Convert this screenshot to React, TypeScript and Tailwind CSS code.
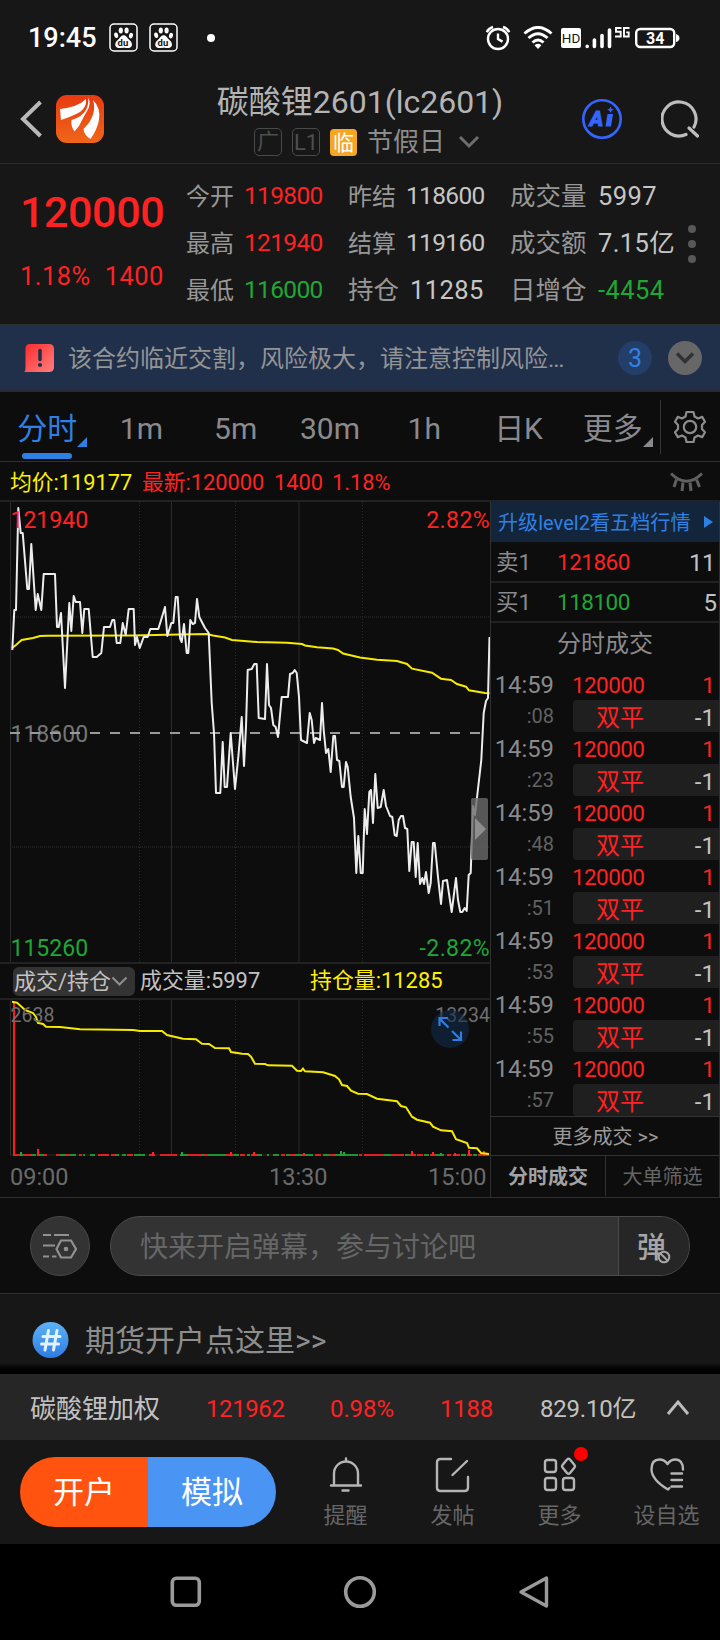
import React from 'react'

interface Trade {
  sec: string
  price: string
  qty: number
}

interface VolumeRun {
  from: number
  to: number
  up: boolean
}

interface VolumeSpike {
  x: number
  height: number
  up: boolean
}

const trades: Trade[] = [
  { sec: ':08', price: '120000', qty: 1 },
  { sec: ':23', price: '120000', qty: 1 },
  { sec: ':48', price: '120000', qty: 1 },
  { sec: ':51', price: '120000', qty: 1 },
  { sec: ':53', price: '120000', qty: 1 },
  { sec: ':55', price: '120000', qty: 1 },
  { sec: ':57', price: '120000', qty: 1 },
]

const periods = ['分时', '1m', '5m', '30m', '1h', '日K', '更多']

const pricePoints =
  '12.3,650 14.3,610 16,610 18.3,508 20.7,533 22.7,533 27.3,589 29,589 31.3,544 35.7,610 37.7,594 41.3,610 43.7,574 55,574 57,627 58.7,627 61,613 65,688 69.3,603 71.3,631 73.7,596 75.7,602 80,602 82.3,633 84.3,609 88.7,609 92.7,657 96.7,657 101.3,653 104,627 110,627 112.3,620 114.3,620 116.7,643 120.3,643 122.7,623 125.7,635 128.7,609 133.7,609 135,645 137,637 139.7,648 143.7,637 147.7,637 150.3,629 158.3,629 162,617 165,607 167.3,636 171.3,623 173.3,623 175.7,597 177.7,597 180,638 181.7,642 184,624 186.7,653 188.3,653 190.3,620 192.7,624 195,623 197,599 199.3,617 205,628 208.7,633 211.7,703 214,733 216,793 220.3,793 222.7,742 224.7,787 227,787 230.7,733 235,789 238.3,757 241.7,717 244,766 246,727 247.7,670 251.7,669 254.3,664 256.7,664 258.7,718 265,719 267,664 269,705 271,708 273.3,725 275.7,727 278,737 281.7,697 288,697 290,674 292.7,673 294.7,670 296.7,673 299,697 301,740 307,743 309.7,713 311.7,720 314,743 315.7,738 320,740 322,703 323.7,730 326,753 328.3,749 330.7,772 333.3,736 335,736 337,760 339.3,761 342,787 343.7,787 346,762 347.7,767 350.7,797 354,818 356.3,873 358.3,836 360.7,873 362.7,873 364.7,809 367,834 369.3,792 371,790 373,823 375.3,774 377.7,808 380.7,807 383.7,790 386,806 390,816 392.3,817 394.7,835 396.7,836 398.7,820 401,816 403,816 405,828 407.3,829 409.3,871 411.7,842 413.7,842 415.7,877 417.7,843 420,884 422.3,878 424,884 426,872 428.7,893 430.7,883 433,843 434.7,843 438,877 441,904 443,881 447,880 451.7,912 456,878 458,900 460.3,912 462.3,912 464.7,908 466.7,911 468.7,875 470.7,873 473,806 475,815 481.3,760 483.7,713 486,701 488,698 489.5,637'

const averagePoints =
  '12,648 16,645 21.7,640 33,638 40,636 47,635.7 133,635.5 167,634.7 207,634 213,635.5 225,637.5 232,640 257,642 287,642.7 302,644 305,645.5 317,647.3 333,648.5 338,650 343,653.5 360,657.5 377,659.7 397,661 407,664 412,668.7 432,672.7 441,678.7 451,680 457,684 466,686.7 469,690.3 485,693 489.5,693.3'

const holdPoints =
  '12,1001.7 17,1002.7 25,1010 33,1013 36,1017 38,1023 43,1024 46,1026.7 60,1027 80,1029.3 133,1030 140,1031 150,1031 162,1031 167,1035 183,1038.7 196,1039.3 202,1043.7 209,1044 215,1048 229,1048.3 231,1052 242,1053.7 248,1054 251,1056.7 255,1063.7 265,1064 268,1065.3 292,1065.7 297,1070.7 301,1071 303,1068.7 305,1071.3 323,1072.3 335,1076 339,1079.3 342,1085 347,1086 351,1090.7 358,1093.7 367,1094 377,1098.7 397,1101.3 401,1106 406,1107.3 412,1116.7 417,1119.7 430,1122.7 433,1126.7 441,1130.3 452,1131.3 456,1139.3 467,1143 469,1147.7 477,1148.3 481,1153 489,1154'

const volumeRuns: VolumeRun[] = [
  { from: 15, to: 20, up: true },
  { from: 20, to: 23, up: false },
  { from: 23, to: 31, up: true },
  { from: 31, to: 36, up: false },
  { from: 39, to: 44, up: false },
  { from: 44, to: 47, up: true },
  { from: 56, to: 60, up: true },
  { from: 60, to: 66, up: false },
  { from: 66, to: 70, up: true },
  { from: 70, to: 76, up: false },
  { from: 79, to: 82, up: true },
  { from: 83, to: 85, up: false },
  { from: 90, to: 95, up: false },
  { from: 98, to: 109, up: true },
  { from: 111, to: 115, up: true },
  { from: 115, to: 119, up: false },
  { from: 122, to: 126, up: false },
  { from: 127, to: 133, up: true },
  { from: 134, to: 145, up: false },
  { from: 149, to: 155, up: true },
  { from: 160, to: 177, up: true },
  { from: 180, to: 188, up: false },
  { from: 188, to: 201, up: true },
  { from: 201, to: 204, up: false },
  { from: 204, to: 208, up: true },
  { from: 208, to: 226, up: false },
  { from: 226, to: 234, up: true },
  { from: 234, to: 239, up: false },
  { from: 240, to: 245, up: true },
  { from: 247, to: 250, up: false },
  { from: 251, to: 257, up: true },
  { from: 257, to: 262, up: false },
  { from: 267, to: 269, up: false },
  { from: 273, to: 279, up: false },
  { from: 281, to: 285, up: true },
  { from: 286, to: 290, up: false },
  { from: 290, to: 295, up: true },
  { from: 295, to: 302, up: false },
  { from: 302, to: 306, up: true },
  { from: 306, to: 313, up: false },
  { from: 315, to: 321, up: true },
  { from: 323, to: 329, up: false },
  { from: 329, to: 335, up: true },
  { from: 335, to: 358, up: false },
  { from: 359, to: 362, up: true },
  { from: 364, to: 384, up: true },
  { from: 384, to: 391, up: false },
  { from: 391, to: 397, up: true },
  { from: 397, to: 404, up: true },
  { from: 405, to: 409, up: false },
  { from: 409, to: 416, up: true },
  { from: 417, to: 423, up: true },
  { from: 424, to: 429, up: false },
  { from: 430, to: 436, up: true },
  { from: 436, to: 444, up: false },
  { from: 447, to: 451, up: true },
  { from: 453, to: 460, up: true },
  { from: 461, to: 466, up: false },
  { from: 467, to: 472, up: true },
  { from: 473, to: 477, up: false },
  { from: 478, to: 489, up: true },
]

const volumeSpikes: VolumeSpike[] = [
  { x: 20, height: 4, up: false },
  { x: 37, height: 7, up: true },
  { x: 152, height: 4, up: true },
  { x: 181, height: 4, up: false },
  { x: 230, height: 4, up: true },
  { x: 253, height: 4, up: true },
  { x: 303, height: 3, up: true },
  { x: 340, height: 5, up: false },
  { x: 343, height: 4, up: false },
  { x: 411, height: 5, up: true },
  { x: 432, height: 4, up: true },
  { x: 440, height: 3, up: false },
  { x: 454, height: 3, up: true },
  { x: 468, height: 6, up: true },
  { x: 483, height: 5, up: true },
]

const BaiduIcon: React.FC = () => (
  <svg width="29" height="29" viewBox="0 0 29 29" fill="#fff">
    <rect x="1" y="1" width="27" height="27" rx="4" fill="none" stroke="#fff" strokeWidth="1.5" />
    <ellipse cx="7.2" cy="12.3" rx="2" ry="2.8" transform="rotate(-15 7.2 12.3)" />
    <ellipse cx="11.8" cy="7.6" rx="2.1" ry="3" />
    <ellipse cx="17.6" cy="7.6" rx="2.1" ry="3" />
    <ellipse cx="22" cy="12.6" rx="2" ry="2.8" transform="rotate(15 22 12.6)" />
    <path d="M14.6 12.2c2.3 0 3.2 2 4.6 3.6 1.6 1.8 3.8 3.2 3.8 5.7 0 2-1.5 3.6-3.6 3.6-1.7 0-3-.4-4.8-.4s-3.1.4-4.8.4c-2.1 0-3.6-1.6-3.6-3.6 0-2.5 2.2-3.9 3.8-5.7 1.4-1.6 2.3-3.6 4.6-3.6z" />
    <text x="8.6" y="23.3" fontSize="9.5" fontWeight="700" fontFamily="Roboto, sans-serif" fill="#171717">du</text>
  </svg>
)

const StatusBar: React.FC = () => (
  <div className="flex h-[75px] items-center pr-[40px] pl-[28px] text-white">
    <span className="w-[81px] pt-[2px] text-[27px] leading-[73px] font-medium">19:45</span>
    <div className="flex gap-[11px]">
      <BaiduIcon />
      <BaiduIcon />
    </div>
    <span className="ml-[29px] h-2 w-2 rounded-full bg-white" />
    <div className="ml-auto flex items-center">
      <svg width="26" height="26" viewBox="0 0 26 26" fill="none" stroke="#fff" strokeWidth="2.4">
        <circle cx="13" cy="14" r="10" />
        <path d="M13 8.5V14l4.500 2.600" />
        <path d="M1.800 7.200Q3.500 3.200 8 2M24.200 7.200Q22.500 3.200 18 2" />
      </svg>
      <svg className="ml-3" width="30" height="24" viewBox="0 0 30 24" fill="none" stroke="#fff" strokeWidth="3">
        <path d="M1.500 7.500Q15-4.500 28.500 7.500" />
        <path d="M5.500 12Q15 3.500 24.500 12" />
        <path d="M9.500 16.500Q15 11.500 20.500 16.500" />
        <path d="M11.500 19.200Q15 16.500 18.500 19.200L15 23z" fill="#fff" stroke="none" />
      </svg>
      <span className="ml-2 h-5 w-5 rounded-[2px] bg-white text-center text-[13.5px] leading-[21px] text-[#171717]">HD</span>
      <svg className="ml-1" width="27" height="22" viewBox="0 0 27 22" stroke="#fff" strokeWidth="3.6" strokeLinecap="round">
        <path d="M2.200 19.400v.1M9.400 13v6.500M17 8.500v11M24.500 3v16.500" />
      </svg>
      <svg className="mb-[10px] ml-[3px]" width="15" height="11" viewBox="0 0 15 11" fill="none" stroke="#fff" strokeWidth="1.9">
        <path d="M6.500 1H1v3.800h4.700V9.500H0M14.500 1H9v8.500h4.700V5.400h-2.500" />
      </svg>
      <svg className="ml-[5px]" width="45" height="22" viewBox="0 0 45 22">
        <rect x="1.2" y="2" width="38" height="18" rx="4" fill="none" stroke="#fff" strokeWidth="2.4" />
        <path d="M41 7q3.500 1 3.500 4T41 15z" fill="#fff" />
        <text x="20.2" y="16.5" textAnchor="middle" fontSize="16" fontWeight="700" fontFamily="Roboto, sans-serif" fill="#fff">34</text>
      </svg>
    </div>
  </div>
)

const Header: React.FC = () => (
  <div className="flex h-[89px] border-b border-[#2a2a2a] pr-4 pl-5">
    <svg className="mt-[25px]" width="23" height="38" viewBox="0 0 23 38" fill="none" stroke="#b9b9b9" strokeWidth="4">
      <path d="M20.500 2L3 19l17.500 17" />
    </svg>
    <svg className="mt-5 ml-[13px]" width="48" height="48" viewBox="0 0 48 48" fill="#fff">
      <defs>
        <linearGradient id="brand" x1="0" y1="0" x2="0" y2="1">
          <stop offset="0" stopColor="#e83a12" />
          <stop offset="1" stopColor="#f0661a" />
        </linearGradient>
      </defs>
      <rect width="48" height="48" rx="11" fill="url(#brand)" />
      <path d="M4 14Q22 12 30 4Q31 12 24 17Q17 21 5 25Z" />
      <path d="M32 2.500Q36 9 30.500 17Q28 21 23 31L18.500 36.500Q14.500 31 15.500 25Q26 22 30 15Q33 9 32 2.500Z" />
      <path d="M37 5Q45 13 43 25Q41 35 34.500 44Q28 40 27.500 34Q35 27 37.500 18Q39 11 37 5Z" />
    </svg>
    <div className="ml-[100px] flex w-[312px] flex-col items-center">
      <h1 className="mt-[7px] text-[32px] leading-10 font-normal whitespace-nowrap text-[#b4b4b4]">碳酸锂2601(lc2601)</h1>
      <div className="mt-[4px] ml-[14px] flex items-center">
        <span className="h-[28px] w-[28px] rounded-[5px] border border-[#4a4a4a] text-center text-[22px] leading-[26px] text-[#4f4f4f]">广</span>
        <span className="ml-[10px] h-[28px] w-[28px] rounded-[5px] border border-[#4a4a4a] text-center text-[22px] leading-[27px] text-[#4f4f4f]">L1</span>
        <span className="ml-[10px] h-[27px] w-[27px] rounded-[4px] bg-[#f5a623] text-center text-[21px] leading-[28px] text-white">临</span>
        <span className="ml-[10px] text-[26px] leading-[32px] text-[#8c8c8c]">节假日</span>
        <svg className="ml-[13px]" width="22" height="14" viewBox="0 0 22 14" fill="none" stroke="#6e6e6e" strokeWidth="3">
          <path d="M2 2l9 9 9-9" />
        </svg>
      </div>
    </div>
    <svg className="mt-[23px] ml-[65px] shrink-0" width="42" height="42" viewBox="0 0 42 42">
      <circle cx="21" cy="21" r="18.7" fill="none" stroke="#3565ff" strokeWidth="2.6" />
      <text x="8.5" y="28" fontSize="21" fontWeight="900" fontStyle="italic" fontFamily="Roboto, sans-serif" fill="#3565ff" stroke="#3565ff" strokeWidth="0.8">A</text>
      <path d="M26.500 16h5.500l-2 12.500h-5.500z" fill="#3565ff" />
      <path d="M29.500 8.500l1 2.300 2.300 1-2.300 1-1 2.300-1-2.300-2.300-1 2.300-1z" fill="#3565ff" />
    </svg>
    <svg className="mt-[23px] ml-[38px] shrink-0" width="40" height="42" viewBox="0 0 40 42" fill="none" stroke="#bdbdbd" strokeWidth="3.2" strokeLinecap="round">
      <path d="M25 36.500A17 17 0 1 1 33 29M28 30l8.500 8" />
    </svg>
  </div>
)

interface QuoteCellProps {
  label: string
  value: string
  labelClass?: string
  valueClass: string
}

const QuoteCell: React.FC<QuoteCellProps> = ({ label, value, labelClass = 'text-[24px]', valueClass }) => (
  <>
    <span className={`whitespace-nowrap text-[#979797] ${labelClass}`}>{label}</span>
    <span className={`whitespace-nowrap ${valueClass}`}>{value}</span>
  </>
)

const TIGHT = 'text-[24.5px] tracking-[-0.65px]'
const WIDE = 'text-[25.5px] tracking-[0.4px]'

const QuotePanel: React.FC = () => (
  <div className="flex h-[161px] border-b border-[#2d2d2d]">
    <div className="w-[186px] pl-[20px]">
      <div className="mt-[22px] text-[43px] leading-[52px] font-medium tracking-[-0.4px] text-[#ff2222]">120000</div>
      <div className="mt-[22px] flex gap-[14px] text-[25.5px] leading-8 tracking-[0.45px] text-[#ff2222]">
        <span>1.18%</span>
        <span>1400</span>
      </div>
    </div>
    <div className="mt-[9px] grid h-[141px] w-[492px] grid-cols-[58px_104px_58px_104px_88px_80px] grid-rows-3 items-center">
      <QuoteCell label="今开" value="119800" valueClass={`${TIGHT} text-[#ff2222]`} />
      <QuoteCell label="昨结" value="118600" valueClass={`${TIGHT} text-[#c6c6c6]`} />
      <QuoteCell label="成交量" value="5997" labelClass="text-[25.5px]" valueClass={`${WIDE} text-[#c6c6c6]`} />
      <QuoteCell label="最高" value="121940" valueClass={`${TIGHT} text-[#ff2222]`} />
      <QuoteCell label="结算" value="119160" valueClass={`${TIGHT} text-[#c6c6c6]`} />
      <QuoteCell label="成交额" value="7.15亿" labelClass="text-[25.5px]" valueClass={`${WIDE} text-[#c6c6c6]`} />
      <QuoteCell label="最低" value="116000" valueClass={`${TIGHT} text-[#1fa637]`} />
      <QuoteCell label="持仓" value="11285" labelClass="text-[25.5px]" valueClass={`${WIDE} pl-1 text-[#c6c6c6]`} />
      <QuoteCell label="日增仓" value="-4454" labelClass="text-[25.5px]" valueClass={`${WIDE} text-[#1fa637]`} />
    </div>
    <div className="mt-[61px] ml-[10px] flex flex-col gap-[7px]">
      <span className="h-2 w-2 rounded-full bg-[#585858]" />
      <span className="h-2 w-2 rounded-full bg-[#585858]" />
      <span className="h-2 w-2 rounded-full bg-[#585858]" />
    </div>
  </div>
)

const NoticeBar: React.FC = () => (
  <div className="flex h-[67px] items-center border-b-2 border-[#26292e] bg-[#20304b] pl-6">
    <svg width="30" height="28" viewBox="0 0 30 28">
      <defs>
        <linearGradient id="alert" x1="0" y1="0" x2="1" y2="1">
          <stop offset="0" stopColor="#ff2a2a" />
          <stop offset="1" stopColor="#ff8080" />
        </linearGradient>
      </defs>
      <path d="M6 0h19q5 0 5 5v18q0 5-5 5H0q1.500-1 1.500-4V5Q1.500 0 6 0z" fill="url(#alert)" />
      <path d="M16 6.500v9" stroke="#20304b" strokeWidth="3.6" strokeLinecap="round" />
      <circle cx="16" cy="21" r="2.1" fill="#20304b" />
    </svg>
    <span className="ml-[14px] w-[550px] pt-[2px] text-[24px] whitespace-nowrap text-[#949494]">
      该合约临近交割，风险极大，请注意控制风险<span className="tracking-[-1.2px]">...</span>
    </span>
    <span className="h-[34px] w-[34px] rounded-full bg-[#233f69] text-center text-[25px] leading-[36px] text-[#3480e4]">3</span>
    <span className="ml-4 flex h-[34px] w-[34px] items-center justify-center rounded-full bg-[#676767]">
      <svg width="20" height="12" viewBox="0 0 20 12" fill="none" stroke="#2f3135" strokeWidth="3.4">
        <path d="M2 1.500l8 8 8-8" />
      </svg>
    </span>
  </div>
)

const PeriodTabs: React.FC = () => (
  <div className="flex h-[70px] items-center border-b border-[#303030]">
    <div className="flex w-[660px]">
      {periods.map((name, i) => (
        <div key={name} className="relative flex h-[69px] flex-1 justify-center">
          <span className={`text-[30px] leading-[74px] ${i === 0 ? 'text-[#2f80e4]' : 'text-[#8a8a8e]'}`}>{name}</span>
          {(i === 0 || i === 6) && (
            <svg className="absolute right-[7px] bottom-[14px]" width="10" height="10" viewBox="0 0 10 10">
              <path d="M10 0v10H0z" fill={i === 0 ? '#2f80e4' : '#8a8a8e'} />
            </svg>
          )}
          {i === 0 && <span className="absolute bottom-[2px] left-[22px] h-[6px] w-[50px] rounded-full bg-[#2f80e4]" />}
        </div>
      ))}
    </div>
    <span className="h-[54px] w-px bg-[#343434]" />
    <svg className="ml-[13px]" width="32" height="34" viewBox="0 0 32 34" fill="none" stroke="#8c8c8c" strokeWidth="2.2" strokeLinejoin="round">
      <path d="M12.500 2h7l1 4.500 3.500 2 4.200-1.600 2.800 4.800-3 3.300v4l3 3.300-2.800 4.800-4.200-1.600-3.500 2-1 4.500h-7l-1-4.500-3.500-2-4.200 1.600L1 22.300 4 19v-4l-3-3.300 2.800-4.800L8 8.500l3.500-2z" />
      <circle cx="16" cy="17" r="6.2" />
    </svg>
  </div>
)

const InfoRow: React.FC = () => (
  <div className="flex h-[40px] items-center border-b-2 border-[#222] pl-[10px] text-[21.8px] leading-[38px]">
    <span className="w-[132px] pt-1 text-[#fff000]">均价:119177</span>
    <span className="w-[132px] pt-1 text-[#ff2222]">最新:120000</span>
    <span className="w-[58px] pt-1 text-[#ff2222]">1400</span>
    <span className="pt-1 text-[#ff2222]">1.18%</span>
    <svg className="mt-px mr-[17px] ml-auto" width="33" height="22" viewBox="0 0 33 22" fill="none" stroke="#606060" strokeWidth="3">
      <path d="M1 2.500Q16.500 18 32 2.500" />
      <path d="M6.500 8.500L4 16M13 11.500L12 20M20 11.500l1 8.500M26.500 8.500l3 7.500" />
    </svg>
  </div>
)

const PriceChart: React.FC = () => (
  <div className="relative h-[460px]">
    <svg className="block" width="490" height="460" viewBox="0 502 490 460" fill="none">
      <path d="M10.500 502v460M171.500 502v460M299 502v460" stroke="#2b2b2b" />
      <path d="M139.500 502v460M235.500 502v460M362.500 502v460" stroke="#2a2a2a" strokeDasharray="1 2" />
      <path d="M10 617h480M10 847h480" stroke="#242424" strokeWidth="1.5" strokeDasharray="1 1" />
      <g fontFamily="Roboto, sans-serif" fontSize="23">
        <text x="10.500" y="742" fill="#747474">118600</text>
      </g>
      <path d="M10 733h480" stroke="#9a9a9a" strokeWidth="1.8" strokeDasharray="10 10" />
      <polyline points={averagePoints} stroke="#f5ea00" strokeWidth="2" />
      <polyline points={pricePoints} stroke="#ededed" strokeWidth="2" strokeLinejoin="round" />
      <g fontFamily="Roboto, sans-serif" fontSize="23">
        <text x="10.500" y="528" fill="#ff2222">121940</text>
        <text x="490" y="528" textAnchor="end" letterSpacing="0.4" fill="#ff2222">2.82%</text>
        <text x="10.500" y="956" fill="#1fa637">115260</text>
        <text x="490" y="956" textAnchor="end" letterSpacing="0.4" fill="#1fa637">-2.82%</text>
      </g>
    </svg>
    <div className="absolute top-[296px] right-[2px] flex h-[62px] w-[17px] items-center rounded-[2px] bg-[#6a6a6a]/80">
      <svg className="ml-1" width="11" height="22" viewBox="0 0 11 22">
        <path d="M0 0l11 11L0 22z" fill="#8e8e8e" />
      </svg>
    </div>
  </div>
)

const VolumeChart: React.FC = () => (
  <div className="relative h-[156px]">
    <svg className="block" width="490" height="156" viewBox="0 1000 490 156" fill="none">
      <path d="M10.500 1000v155M171.500 1000v155M299 1000v155M10 1155h480" stroke="#2b2b2b" />
      <path d="M139.500 1000v155M235.500 1000v155M362.500 1000v155" stroke="#2a2a2a" strokeDasharray="1 2" />
      {volumeRuns.map((run) => (
        <path key={run.from} d={`M${run.from} 1155H${run.to}`} stroke={run.up ? '#e02020' : '#1c9432'} strokeWidth="2" />
      ))}
      {volumeSpikes.map((s) => (
        <rect key={s.x} x={s.x} y={1156 - s.height} width="2" height={s.height} fill={s.up ? '#ff2222' : '#1fa637'} />
      ))}
      <rect x="13" y="1002" width="2" height="154" fill="#ff1a1a" />
      <polyline points={holdPoints} stroke="#f5ea00" strokeWidth="2" />
      <g fontFamily="Roboto, sans-serif" fontSize="19.5" fill="#6f6f6f">
        <text x="10.500" y="1022">2638</text>
        <text x="490" y="1022" textAnchor="end">13234</text>
      </g>
    </svg>
    <div className="absolute top-[10px] right-[21px] h-[38px] w-[38px] rounded-full bg-[#13294a]/60">
      <svg width="38" height="38" viewBox="0 0 38 38" fill="none" stroke="#2f7de0" strokeWidth="2.2">
        <path d="M17.500 17.500L9 9M8.500 16V8H17M21 21l8.500 8.500M30 21.500V30h-8.500" />
      </svg>
    </div>
  </div>
)

const ChartColumn: React.FC = () => (
  <div className="w-[490px]">
    <PriceChart />
    <div className="flex h-[38px] items-center border-y-2 border-[#222] text-[22px]">
      <span className="ml-[13px] flex h-[29px] w-[122px] items-center rounded-[6px] bg-[#333] pl-px leading-[31px] text-[#c2c2c2]">
        成交/持仓
        <svg width="17" height="10" viewBox="0 0 17 10" fill="none" stroke="#8f8f8f" strokeWidth="2">
          <path d="M1.500 1.500l7 7 7-7" />
        </svg>
      </span>
      <span className="ml-[5px] w-[170px] pt-px text-[21.9px] text-[#c2c2c2]">成交量:5997</span>
      <span className="pt-px text-[21.9px] text-[#fff000]">持仓量:11285</span>
    </div>
    <VolumeChart />
    <div className="flex h-[41px] items-center pl-[10px] text-[23.5px] leading-[42px] text-[#6b6b6b]">
      <span className="w-[259px]">09:00</span>
      <span className="w-[159px]">13:30</span>
      <span>15:00</span>
    </div>
  </div>
)

const OrderColumn: React.FC = () => (
  <div className="w-[230px] border-x border-[#303030]">
    <div className="flex h-[40px] items-center bg-[#12253a] pl-[7px] text-[20.1px] text-[#2f80e4]">
      <span className="pt-[2px] whitespace-nowrap">升级level2看五档行情</span>
      <svg className="mr-[6px] ml-auto" width="9" height="12" viewBox="0 0 9 12">
        <path d="M0 0l9 6-9 6z" fill="#2f80e4" />
      </svg>
    </div>
    <div className="flex h-[41px] items-center border-b-2 border-[#222] pt-[2px] pl-[5px] text-[22.5px]">
      <span className="w-[61px] text-[#8a8a8e]">卖1</span>
      <span className="tracking-[-0.5px] text-[#ff2222]">121860</span>
      <span className="mr-[4px] ml-auto text-[24px] tracking-[-0.5px] text-[#c2c2c2]">11</span>
    </div>
    <div className="flex h-[40px] items-center border-b-2 border-[#222] pt-[2px] pl-[5px] text-[22.5px]">
      <span className="w-[61px] text-[#8a8a8e]">买1</span>
      <span className="tracking-[-0.5px] text-[#1fa637]">118100</span>
      <span className="mr-[2px] ml-auto text-[24px] text-[#c2c2c2]">5</span>
    </div>
    <div className="h-[45px] text-center text-[24px] leading-[43px] text-[#8a8a8e]">分时成交</div>
    {trades.map((t) => (
      <div key={t.sec} className="grid h-16 grid-cols-[63px_19px_1fr] grid-rows-2">
        <span className="text-right text-[23.8px] leading-[35px] text-[#8a8a8e]">14:59</span>
        <span />
        <span className="flex justify-between pr-[4px] text-[22.5px] leading-[34px] text-[#ff2222]">
          <span className="-ml-px tracking-[-0.6px]">{t.price}</span>
          <span>{t.qty}</span>
        </span>
        <span className="text-right text-[20px] leading-[32px] text-[#626262]">{t.sec}</span>
        <span />
        <span className="flex h-8 justify-between rounded-l-[4px] bg-[#1f1f1f] pr-[4px] pl-[23px] text-[24px] leading-[37px]">
          <span className="text-[#ff2222]">双平</span>
          <span className="text-[#c2c2c2]">-{t.qty}</span>
        </span>
      </div>
    ))}
    <div className="h-[39px] border-t border-[#333] pl-px text-center text-[20px] leading-[41px] text-[#9a9a9a]">更多成交 &gt;&gt;</div>
    <div className="flex h-[41px] border-t border-[#333] text-center text-[20px] leading-[43px]">
      <span className="w-[115px] border-r border-[#333] font-bold text-[#a2a2a2]">分时成交</span>
      <span className="flex-1 text-[#666]">大单筛选</span>
    </div>
  </div>
)

const DanmuBar: React.FC = () => (
  <div className="flex h-[97px] items-center border-y border-[#303030] bg-[#0d0d0d] pl-[30px]">
    <span className="flex h-[60px] w-[60px] items-center justify-center rounded-full border border-[#484848] bg-[#333]">
      <svg width="34" height="26" viewBox="0 0 34 26" fill="none" stroke="#919191" strokeWidth="2.2">
        <path d="M0 2h8M11 2h15M0 12.500h12M0 23.500h6M9 23.500h4.500" />
        <path d="M18 7.500h10l5 8.500-5 8.500H18L13.500 16z" />
        <circle cx="23" cy="16" r="1.2" fill="#919191" />
      </svg>
    </span>
    <div className="ml-5 flex h-[60px] w-[580px] overflow-hidden rounded-full border border-[#4a4a4a] bg-[#333]">
      <span className="w-[508px] border-r border-[#4a4a4a] pl-[29px] text-[28px] leading-[61px] text-[#666]">快来开启弹幕，参与讨论吧</span>
      <span className="relative flex-1 bg-[#262626] pl-[18px] text-[29px] leading-[63px] font-medium text-[#a6a6a6]">
        弹
        <svg className="absolute top-[33px] left-[38px]" width="14" height="14" viewBox="0 0 14 14" stroke="#a6a6a6" strokeWidth="2">
          <circle cx="7" cy="7" r="5.3" fill="#262626" />
          <path d="M3.500 3.500l7 7" />
        </svg>
      </span>
    </div>
  </div>
)

const TopicRow: React.FC = () => (
  <div className="bg-[#171717]">
    <div className="flex h-[69px] items-end pl-8">
      <svg className="mb-[5px]" width="37" height="36" viewBox="0 0 37 36">
        <defs>
          <linearGradient id="topic" x1="0" y1="0" x2="0" y2="1">
            <stop offset="0" stopColor="#5cb2f5" />
            <stop offset="1" stopColor="#2f7ce2" />
          </linearGradient>
        </defs>
        <circle cx="18.5" cy="18" r="18" fill="url(#topic)" />
        <path d="M16.500 8.500L13 28M25 8.500L21.500 28M11 14.500h17M9.500 22h17" stroke="#e4f2ff" strokeWidth="3" strokeLinecap="round" fill="none" />
      </svg>
      <span className="ml-4 text-[30px] leading-[44px] text-[#8e8e8e]">期货开户点这里&gt;&gt;</span>
    </div>
    <div className="h-[11px] bg-gradient-to-b from-[#171717] to-black" />
  </div>
)

const IndexRow: React.FC = () => (
  <div className="flex h-[66px] items-center bg-[#262626] pl-[30px] text-[24px] leading-[66px] text-[#ff2222]">
    <span className="w-[176px] pt-[3px] text-[26px] text-[#c2c2c2]">碳酸锂加权</span>
    <span className="w-[124px] pt-[3px] tracking-[-0.4px]">121962</span>
    <span className="w-[110px] pt-[3px] tracking-[-0.1px]">0.98%</span>
    <span className="w-[100px] pt-[3px] tracking-[-0.2px]">1188</span>
    <span className="w-[126px] pt-[3px] tracking-[-0.2px] text-[#c2c2c2]">829.10亿</span>
    <svg width="24" height="17" viewBox="0 0 24 17" fill="none" stroke="#bdbdbd" strokeWidth="3">
      <path d="M2 15L12 3l10 12" />
    </svg>
  </div>
)

interface ActionProps {
  label: string
  children: React.ReactNode
}

const Action: React.FC<ActionProps> = ({ label, children }) => (
  <div className="flex w-[107px] flex-col items-center text-[22px] leading-[30px] text-[#666]">
    <svg className="mb-[8px] overflow-visible" width="36" height="36" viewBox="0 0 36 36" fill="none" stroke="#b5b5b5" strokeWidth="2.4" strokeLinecap="round" strokeLinejoin="round">
      {children}
    </svg>
    {label}
  </div>
)

const BottomBar: React.FC = () => (
  <div className="flex h-[104px] items-start bg-[#171717] pl-5">
    <div className="mt-[17px] flex h-[70px] w-[256px] overflow-hidden rounded-full text-center text-[31px] leading-[72px] text-white">
      <span className="w-[128px] bg-[#ff530f]">开户</span>
      <span className="w-[128px] bg-[#4a95f3]">模拟</span>
    </div>
    <div className="mt-[17px] ml-[16px] flex">
      <Action label="提醒">
        <path d="M6 28V16.500a12 12 0 0 1 24 0V28M3 28.500h30M18 4V1.500M14.500 33.500h6" />
      </Action>
      <Action label="发帖">
        <path d="M16 2H5.500Q2 2 2 5.500v25Q2 34 5.500 34h24q3.500 0 3.500-3.500V20M17.500 18L32 4" />
      </Action>
      <Action label="更多">
        <rect x="3" y="3" width="11" height="12" rx="2.5" />
        <rect x="3" y="21" width="11" height="12" rx="2.5" />
        <rect x="21" y="21" width="11" height="12" rx="2.5" />
        <path d="M25 2.500L20.500 8q-1 1.200 0 2.400L25 16q1.500 1.500 3 0l4.500-5.600q1-1.200 0-2.400L28 2.500q-1.500-1.500-3 0z" />
        <circle cx="39" cy="-3" r="7" fill="#f00" stroke="none" />
      </Action>
      <Action label="设自选">
        <path d="M34 12.500C34 6 31 2.500 26.500 2.500c-4 0-6 1.500-8 4.500-2-3-4-4.500-8-4.500C5.500 2.500 2.500 6 2.500 12c0 8 8 15.500 16.500 20.500l1.500-1.500M22.500 16.500H33M22.500 23H33M22.500 29.500H33" />
      </Action>
    </div>
  </div>
)

const NavBar: React.FC = () => (
  <div className="flex h-[96px] items-center justify-between bg-black px-[170px]">
    <svg width="32" height="32" viewBox="0 0 32 32" fill="none" stroke="#9a9a9a" strokeWidth="3.6">
      <rect x="2.3" y="2.3" width="27" height="27" rx="4" />
    </svg>
    <svg width="34" height="34" viewBox="0 0 34 34" fill="none" stroke="#9a9a9a" strokeWidth="3.6">
      <circle cx="17" cy="17" r="14.3" />
    </svg>
    <svg width="32" height="34" viewBox="0 0 32 34" fill="none" stroke="#9a9a9a" strokeWidth="3.4" strokeLinejoin="round">
      <path d="M28.500 3v28L3 17z" />
    </svg>
  </div>
)

export default function App() {
  return (
    <div className="h-[1640px] w-[720px] overflow-hidden bg-[#0d0d0d] font-['Roboto','Noto_Sans_CJK_SC',sans-serif]">
      <div className="bg-[#171717]">
        <StatusBar />
        <Header />
        <QuotePanel />
      </div>
      <NoticeBar />
      <PeriodTabs />
      <InfoRow />
      <div className="flex h-[695px]">
        <ChartColumn />
        <OrderColumn />
      </div>
      <DanmuBar />
      <TopicRow />
      <IndexRow />
      <BottomBar />
      <NavBar />
    </div>
  )
}
